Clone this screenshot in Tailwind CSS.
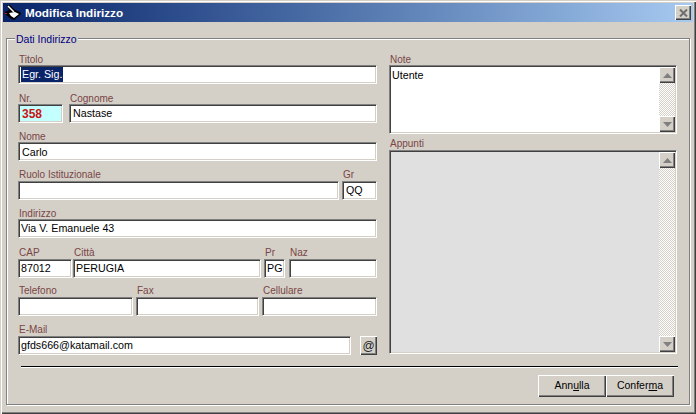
<!DOCTYPE html>
<html lang="it">

<head>
    <meta charset="UTF-8">
    <title>Modifica Indirizzo</title>
    <script src="https://cdn.jsdelivr.net/npm/@tailwindcss/browser@4"></script>
</head>

<body class="bg-[#d4d0c8]">
    <div class="w-[696px] h-[414px] overflow-hidden bg-[#d4d0c8] pt-[3px] px-[3px] font-['Liberation_Sans',sans-serif] text-[10.7px] text-black shadow-[inset_1px_1px_0_#d4d0c8,inset_2px_2px_0_#fff,inset_-1px_-1px_0_#404040,inset_-2px_-2px_0_#808080]">
        <!-- title bar -->
        <div class="flex items-center h-[19px] w-[690px] bg-gradient-to-r from-[#0a246a] to-[#a6caf0] pl-[1px] pr-[2px]">
            <svg class="w-[18px] h-[17px] shrink-0" viewBox="0 0 18 17">
                <path d="M1 8 L5 6 L3 1 L6 1 L11 6 L16 8 L17 10 L10 16 L6 14 L2 11 Z" fill="#000" />
                <path d="M4 2 L10 8" stroke="#fff" stroke-width="1.5" fill="none" />
                <path d="M5 9 L11 8 L15 10 L10 14 L7 12 Z" fill="#fff" />
                <rect x="1" y="9" width="2" height="1" fill="#c81414" />
            </svg>
            <span class="ml-[3px] flex-1 text-white font-bold text-[11.7px] leading-none">Modifica Indirizzo</span>
            <div class="flex items-center justify-center w-[16px] h-[15px] bg-[#d4d0c8] shadow-[inset_1px_1px_0_#fff,inset_-1px_-1px_0_#404040,inset_-2px_-2px_0_#808080]">
                <svg class="w-[9px] h-[8px]" viewBox="0 0 9 8">
                    <path d="M1 0.5 L8 7.5 M8 0.5 L1 7.5" stroke="#6e6e6e" stroke-width="2" fill="none" />
                </svg>
            </div>
        </div>

        <!-- group box -->
        <div class="relative mt-[16px] w-[684px] h-[367px] ml-[3px] border border-[#808080] shadow-[inset_1px_1px_0_#fff,1px_1px_0_#fff] pt-[14px] pl-[11px]">
            <span class="absolute left-[8px] top-[-6px] px-[1px] bg-[#d4d0c8] text-[#000080] text-[10.5px] leading-[13px]">Dati Indirizzo</span>

            <div class="flex gap-[12px]">
                <!-- left column -->
                <div class="flex flex-col w-[359px]">
                    <div>
                        <div class="h-[12px] leading-[14px] pl-[1px] text-[10px] text-[#7a4545]">Titolo</div>
                        <div class="h-[19px] flex items-center pl-[2px] bg-white border border-t-[#808080] border-l-[#808080] border-r-white border-b-white shadow-[inset_1px_1px_0_#404040,inset_-1px_-1px_0_#d4d0c8]">
                            <span class="bg-[#0a246a] text-white leading-[15px] px-[1px]">Egr. Sig.</span>
                        </div>
                    </div>

                    <div class="flex gap-[6px] mt-[8px]">
                        <div class="w-[45px]">
                            <div class="h-[12px] leading-[14px] pl-[1px] text-[10px] text-[#7a4545]">Nr.</div>
                            <div class="h-[19px] flex items-center pl-[3px] bg-[#c4ffff] border border-t-[#808080] border-l-[#808080] border-r-white border-b-white shadow-[inset_1px_1px_0_#404040,inset_-1px_-1px_0_#d4d0c8] text-[#c81414] font-bold text-[12px]">358</div>
                        </div>
                        <div class="flex-1">
                            <div class="h-[12px] leading-[14px] pl-[1px] text-[10px] text-[#7a4545]">Cognome</div>
                            <div class="h-[19px] flex items-center pl-[3px] bg-white border border-t-[#808080] border-l-[#808080] border-r-white border-b-white shadow-[inset_1px_1px_0_#404040,inset_-1px_-1px_0_#d4d0c8]">Nastase</div>
                        </div>
                    </div>

                    <div class="mt-[7px]">
                        <div class="h-[12px] leading-[14px] pl-[1px] text-[10px] text-[#7a4545]">Nome</div>
                        <div class="h-[19px] flex items-center pl-[3px] pt-[1px] bg-white border border-t-[#808080] border-l-[#808080] border-r-white border-b-white shadow-[inset_1px_1px_0_#404040,inset_-1px_-1px_0_#d4d0c8]">Carlo</div>
                    </div>

                    <div class="flex gap-[3px] mt-[8px]">
                        <div class="flex-1">
                            <div class="h-[12px] leading-[11px] pl-[1px] text-[10px] text-[#7a4545]">Ruolo Istituzionale</div>
                            <div class="h-[19px] bg-white border border-t-[#808080] border-l-[#808080] border-r-white border-b-white shadow-[inset_1px_1px_0_#404040,inset_-1px_-1px_0_#d4d0c8]"></div>
                        </div>
                        <div class="w-[35px]">
                            <div class="h-[12px] leading-[11px] pl-[1px] text-[10px] text-[#7a4545]">Gr</div>
                            <div class="h-[19px] flex items-center pl-[3px] bg-white border border-t-[#808080] border-l-[#808080] border-r-white border-b-white shadow-[inset_1px_1px_0_#404040,inset_-1px_-1px_0_#d4d0c8]">QQ</div>
                        </div>
                    </div>

                    <div class="mt-[7px]">
                        <div class="h-[12px] leading-[14px] pl-[1px] text-[10px] text-[#7a4545]">Indirizzo</div>
                        <div class="h-[19px] flex items-center pl-[2px] bg-white border border-t-[#808080] border-l-[#808080] border-r-white border-b-white shadow-[inset_1px_1px_0_#404040,inset_-1px_-1px_0_#d4d0c8]">Via V. Emanuele 43</div>
                    </div>

                    <div class="flex mt-[9px]">
                        <div class="w-[54px]">
                            <div class="h-[12px] leading-[12px] pl-[1px] text-[10px] text-[#7a4545]">CAP</div>
                            <div class="h-[19px] flex items-center pl-[2px] bg-white border border-t-[#808080] border-l-[#808080] border-r-white border-b-white shadow-[inset_1px_1px_0_#404040,inset_-1px_-1px_0_#d4d0c8]">87012</div>
                        </div>
                        <div class="w-[188px] ml-[1px]">
                            <div class="h-[12px] leading-[12px] pl-[1px] text-[10px] text-[#7a4545]">Città</div>
                            <div class="h-[19px] flex items-center pl-[2px] bg-white border border-t-[#808080] border-l-[#808080] border-r-white border-b-white shadow-[inset_1px_1px_0_#404040,inset_-1px_-1px_0_#d4d0c8]">PERUGIA</div>
                        </div>
                        <div class="w-[21px] ml-[3px]">
                            <div class="h-[12px] leading-[12px] pl-[1px] text-[10px] text-[#7a4545]">Pr</div>
                            <div class="h-[19px] flex items-center pl-[2px] bg-white border border-t-[#808080] border-l-[#808080] border-r-white border-b-white shadow-[inset_1px_1px_0_#404040,inset_-1px_-1px_0_#d4d0c8]">PG</div>
                        </div>
                        <div class="flex-1 ml-[4px]">
                            <div class="h-[12px] leading-[12px] pl-[1px] text-[10px] text-[#7a4545]">Naz</div>
                            <div class="h-[19px] bg-white border border-t-[#808080] border-l-[#808080] border-r-white border-b-white shadow-[inset_1px_1px_0_#404040,inset_-1px_-1px_0_#d4d0c8]"></div>
                        </div>
                    </div>

                    <div class="flex gap-[3px] mt-[7px]">
                        <div class="w-[115px]">
                            <div class="h-[12px] leading-[12px] pl-[1px] text-[10px] text-[#7a4545]">Telefono</div>
                            <div class="h-[19px] bg-white border border-t-[#808080] border-l-[#808080] border-r-white border-b-white shadow-[inset_1px_1px_0_#404040,inset_-1px_-1px_0_#d4d0c8]"></div>
                        </div>
                        <div class="w-[123px]">
                            <div class="h-[12px] leading-[12px] pl-[1px] text-[10px] text-[#7a4545]">Fax</div>
                            <div class="h-[19px] bg-white border border-t-[#808080] border-l-[#808080] border-r-white border-b-white shadow-[inset_1px_1px_0_#404040,inset_-1px_-1px_0_#d4d0c8]"></div>
                        </div>
                        <div class="flex-1">
                            <div class="h-[12px] leading-[12px] pl-[1px] text-[10px] text-[#7a4545]">Cellulare</div>
                            <div class="h-[19px] bg-white border border-t-[#808080] border-l-[#808080] border-r-white border-b-white shadow-[inset_1px_1px_0_#404040,inset_-1px_-1px_0_#d4d0c8]"></div>
                        </div>
                    </div>

                    <div class="flex items-end justify-between mt-[8px]">
                        <div class="w-[333px]">
                            <div class="h-[12px] leading-[12px] pl-[1px] text-[10px] text-[#7a4545]">E-Mail</div>
                            <div class="h-[19px] flex items-center pl-[2px] bg-white border border-t-[#808080] border-l-[#808080] border-r-white border-b-white shadow-[inset_1px_1px_0_#404040,inset_-1px_-1px_0_#d4d0c8]">gfds666@katamail.com</div>
                        </div>
                        <div class="w-[17px] h-[19px] flex items-center justify-center bg-[#d4d0c8] text-[12px] text-[#222] shadow-[inset_1px_1px_0_#fff,inset_-1px_-1px_0_#404040,inset_-2px_-2px_0_#808080]">@</div>
                    </div>
                </div>

                <!-- right column -->
                <div class="flex flex-col w-[288px]">
                    <div class="h-[12px] leading-[14px] pl-[1px] text-[10px] text-[#7a4545]">Note</div>
                    <div class="h-[69px] flex justify-between bg-white border border-t-[#808080] border-l-[#808080] border-r-white border-b-white shadow-[inset_1px_1px_0_#404040,inset_-1px_-1px_0_#d4d0c8] pt-[1px] pr-[1px] pb-[1px]">
                        <span class="pl-[2px]">Utente</span>
                        <div class="w-[16px] flex flex-col justify-between bg-[repeating-conic-gradient(#d4d0c8_0_25%,#fff_0_50%)] bg-[length:2px_2px]">
                            <div class="h-[16px] flex items-center justify-center bg-[#d4d0c8] shadow-[inset_1px_1px_0_#fff,inset_-1px_-1px_0_#404040,inset_-2px_-2px_0_#808080]">
                                <svg class="w-[9px] h-[5px]" viewBox="0 0 9 5"><path d="M4.5 0 L9 5 L0 5 Z" fill="#808080" /></svg>
                            </div>
                            <div class="h-[16px] flex items-center justify-center bg-[#d4d0c8] shadow-[inset_1px_1px_0_#fff,inset_-1px_-1px_0_#404040,inset_-2px_-2px_0_#808080]">
                                <svg class="w-[9px] h-[5px]" viewBox="0 0 9 5"><path d="M0 0 L9 0 L4.5 5 Z" fill="#808080" /></svg>
                            </div>
                        </div>
                    </div>

                    <div class="h-[12px] leading-[12px] pl-[1px] text-[10px] text-[#7a4545] mt-[4px]">Appunti</div>
                    <div class="h-[204px] flex justify-end bg-[#e0e0e0] border border-t-[#808080] border-l-[#808080] border-r-white border-b-white shadow-[inset_1px_1px_0_#404040,inset_-1px_-1px_0_#d4d0c8] pt-[1px] pr-[1px] pb-[1px]">
                        <div class="w-[16px] flex flex-col justify-between bg-[repeating-conic-gradient(#d4d0c8_0_25%,#fff_0_50%)] bg-[length:2px_2px]">
                            <div class="h-[16px] flex items-center justify-center bg-[#d4d0c8] shadow-[inset_1px_1px_0_#fff,inset_-1px_-1px_0_#404040,inset_-2px_-2px_0_#808080]">
                                <svg class="w-[9px] h-[5px]" viewBox="0 0 9 5"><path d="M4.5 0 L9 5 L0 5 Z" fill="#808080" /></svg>
                            </div>
                            <div class="h-[16px] flex items-center justify-center bg-[#d4d0c8] shadow-[inset_1px_1px_0_#fff,inset_-1px_-1px_0_#404040,inset_-2px_-2px_0_#808080]">
                                <svg class="w-[9px] h-[5px]" viewBox="0 0 9 5"><path d="M0 0 L9 0 L4.5 5 Z" fill="#808080" /></svg>
                            </div>
                        </div>
                    </div>
                </div>
            </div>

            <!-- separator -->
            <div class="mt-[11px] ml-[3px] w-[657px] h-[2px] border-t border-black border-b-0 bg-white"></div>

            <!-- buttons -->
            <div class="flex justify-end mt-[7px] w-[655px] ml-[1px]">
                <button class="w-[68px] h-[22px] bg-[#d4d0c8] text-[10.5px] shadow-[inset_1px_1px_0_#fff,inset_-1px_-1px_0_#404040,inset_-2px_-2px_0_#808080]">Ann<u>u</u>lla</button>
                <button class="w-[68px] h-[22px] bg-[#d4d0c8] text-[10.5px] shadow-[inset_1px_1px_0_#fff,inset_-1px_-1px_0_#404040,inset_-2px_-2px_0_#808080]">Confer<u>m</u>a</button>
            </div>
        </div>
    </div>
</body>

</html>
